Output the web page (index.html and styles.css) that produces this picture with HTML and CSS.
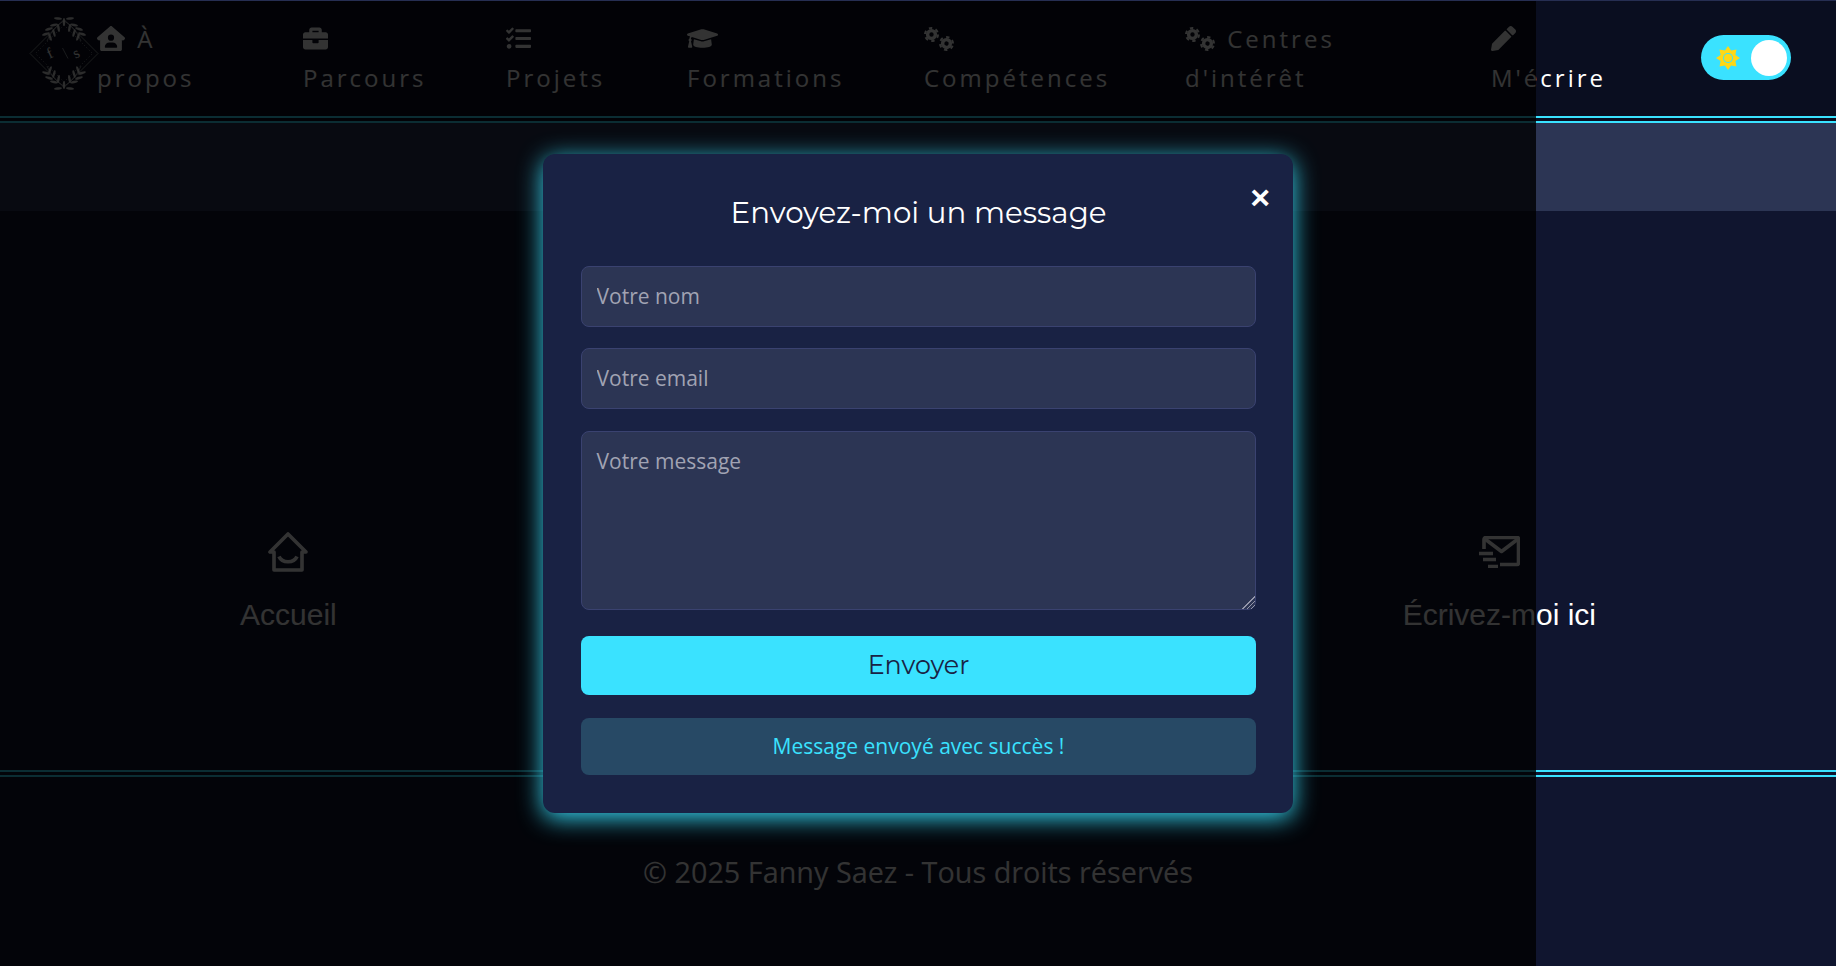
FILE: index.html
```html
<!DOCTYPE html>
<html lang="fr">
<head>
<meta charset="utf-8">
<title>Fanny Saez</title>
<link rel="stylesheet" href="styles.css">
</head>
<body>
<svg class="defs" width="0" height="0" aria-hidden="true">
  <defs>
    <g id="gear">
      <circle r="6.500" fill="none" stroke="currentColor" stroke-width="2" stroke-dasharray="3.400 3.407"/>
      <circle r="3.900" fill="none" stroke="currentColor" stroke-width="3.400"/>
    </g>
    <g id="cogs"><use href="#gear" transform="translate(7.500 7.500)"/><use href="#gear" transform="translate(22.500 16.500) rotate(20)"/></g>
    <ellipse id="leaf" rx="4" ry="1.200" class="leaf"/>
    <g id="spray">
      <use href="#leaf" transform="translate(28 2.500) rotate(8)"/>
      <use href="#leaf" transform="translate(40 2.500) rotate(-8)"/>
      <use href="#leaf" transform="translate(34 6) rotate(90)"/>
      <use href="#leaf" transform="translate(24 9) rotate(-12)"/>
      <use href="#leaf" transform="translate(44 9) rotate(12)"/>
      <use href="#leaf" transform="translate(28.500 12) rotate(80)"/>
      <use href="#leaf" transform="translate(39.500 12) rotate(100)"/>
      <use href="#leaf" transform="translate(19 13) rotate(-18)"/>
      <use href="#leaf" transform="translate(49 13) rotate(18)"/>
      <use href="#leaf" transform="translate(24 17) rotate(75)"/>
      <use href="#leaf" transform="translate(44 17) rotate(105)"/>
      <use href="#leaf" transform="translate(16 18) rotate(-18)"/>
      <use href="#leaf" transform="translate(52 18) rotate(18)"/>
      <use href="#leaf" transform="translate(20 21) rotate(70)"/>
      <use href="#leaf" transform="translate(48 21) rotate(110)"/>
      <path class="logo-line" d="M34 5C28 8 22 14 17 25M34 5C40 8 46 14 51 25"/>
    </g>
  </defs>
</svg>

<header class="site-header">
  <svg class="logo" viewBox="0 0 68 75" role="img" aria-label="Logo FS">
    <path class="logo-line" d="M34 3.500 68 37.500 34 71.500 0 37.500Z"/>
    <path class="logo-dots" d="M34 9 62.500 37.500 34 66 5.500 37.500Z"/>
    <path class="logo-line" d="M32.500 32 38 42.500"/>
    <text class="logo-letter" x="17" y="42" transform="rotate(-25 20 37)">f</text>
    <text class="logo-letter" x="43" y="42" transform="rotate(-25 46 37)">s</text>
    <use href="#spray"/>
    <use href="#spray" transform="translate(0 75) scale(1 -1)"/>
  </svg>
  <nav class="main-nav">
    <a class="nav-item nav-wide">
      <svg class="ico ico-house" viewBox="0 0 576 512"><path fill-rule="evenodd" d="M288 0C281 0 272 3 266 8L10 232C-1 243-3 258 6 270L22 288C32 299 47 300 58 291L64 286V480C64 498 78 512 96 512H480C498 512 512 498 512 480V286L518 291C529 300 544 299 554 288L570 270C579 258 577 243 566 232L310 8C304 3 295 0 288 0ZM288 176A64 64 0 1 1 288 304A64 64 0 1 1 288 176ZM400 448H176A16 16 0 0 1 160 432A96 96 0 0 1 256 336H320A96 96 0 0 1 416 432A16 16 0 0 1 400 448Z"/></svg>
      À propos
    </a>
    <a class="nav-item">
      <svg class="ico ico-square" viewBox="0 0 512 512"><path d="M320 336c0 8.840-7.160 16-16 16h-96c-8.840 0-16-7.160-16-16v-48H0v144c0 25.600 22.400 48 48 48h416c25.600 0 48-22.400 48-48V288H320v48zm144-208h-80V80c0-25.600-22.400-48-48-48H176c-25.600 0-48 22.400-48 48v48H48c-25.600 0-48 22.400-48 48v80h512v-80c0-25.600-22.400-48-48-48zm-144 0H192V96h128v32z"/></svg>
      Parcours
    </a>
    <a class="nav-item">
      <svg class="ico ico-square" viewBox="0 0 512 512"><path d="M139.610 35.500a12 12 0 0 0-17 0L58.930 98.810l-22.700-22.120a12 12 0 0 0-17 0L3.530 92.410a12 12 0 0 0 0 17l47.590 47.400a12.780 12.780 0 0 0 17.610 0l15.590-15.620L156.520 69a12.090 12.090 0 0 0 .09-17zm0 159.190a12 12 0 0 0-17 0l-63.680 63.720-22.700-22.100a12 12 0 0 0-17 0L3.530 252a12 12 0 0 0 0 17L51 316.500a12.770 12.770 0 0 0 17.600 0l15.700-15.690 72.200-72.220a12 12 0 0 0 .09-16.900zM64 368c-26.490 0-48.590 21.500-48.590 48S37.530 464 64 464a48 48 0 0 0 0-96zm432 16H208a16 16 0 0 0-16 16v32a16 16 0 0 0 16 16h288a16 16 0 0 0 16-16v-32a16 16 0 0 0-16-16zm0-320H208a16 16 0 0 0-16 16v32a16 16 0 0 0 16 16h288a16 16 0 0 0 16-16V80a16 16 0 0 0-16-16zm0 160H208a16 16 0 0 0-16 16v32a16 16 0 0 0 16 16h288a16 16 0 0 0 16-16v-32a16 16 0 0 0-16-16z"/></svg>
      Projets
    </a>
    <a class="nav-item">
      <svg class="ico ico-cap" viewBox="0 0 640 512"><path d="M622.340 153.200L343.400 67.500c-15.200-4.670-31.600-4.670-46.790 0L17.660 153.200c-23.540 7.230-23.540 38.360 0 45.590l48.630 14.940c-10.670 13.190-17.230 29.280-17.880 46.900C38.780 266.150 32 276.110 32 288c0 10.780 5.680 19.850 13.860 25.650L20.330 428.530C18.110 438.520 25.710 448 35.940 448h56.110c10.240 0 17.840-9.480 15.620-19.470L82.140 313.650C90.320 307.850 96 298.780 96 288c0-11.570-6.470-21.250-15.660-26.870.76-15.020 8.440-28.300 20.690-36.720L296.600 284.500c9.060 2.780 26.440 6.250 46.790 0l278.950-85.700c23.550-7.240 23.550-38.360 0-45.600zM352.790 315.090c-28.530 8.760-52.840 3.920-65.590 0l-145.020-44.550L128 384c0 35.350 85.960 64 192 64s192-28.650 192-64l-14.180-113.470-145.030 44.560z"/></svg>
      Formations
    </a>
    <a class="nav-item">
      <svg class="ico ico-cogs" viewBox="0 0 30 24"><use href="#cogs"/></svg>
      Compétences
    </a>
    <a class="nav-item nav-wider">
      <svg class="ico ico-cogs" viewBox="0 0 30 24"><use href="#cogs"/></svg>
      Centres d'intérêt
    </a>
    <a class="nav-item">
      <svg class="ico ico-square" viewBox="0 0 512 512"><path d="M497.900 142.100l-46.100 46.100c-4.700 4.700-12.300 4.700-17 0l-111-111c-4.700-4.700-4.700-12.300 0-17l46.100-46.100c18.700-18.700 49.100-18.700 67.900 0l60.100 60.100c18.800 18.700 18.800 49.100 0 67.900zM284.200 99.800L21.600 362.400.4 483.900c-2.900 16.400 11.400 30.600 27.800 27.800l121.500-21.300 262.600-262.600c4.700-4.700 4.700-12.300 0-17l-111-111c-4.800-4.700-12.400-4.700-17.100 0z"/></svg>
      M'écrire
    </a>
  </nav>
  <div class="theme-toggle">
    <svg class="sun" viewBox="0 0 24 24">
      <path class="sun-rays" d="M12 0 15.060 4.610 20.490 3.510 19.390 8.940 24 12 19.390 15.060 20.490 20.490 15.060 19.390 12 24 8.940 19.390 3.510 20.490 4.610 15.060 0 12 4.610 8.940 3.510 3.510 8.940 4.610Z"/>
      <circle class="sun-ring" cx="12" cy="12" r="5"/>
      <circle class="sun-core" cx="12" cy="12" r="4"/>
    </svg>
    <span class="knob"></span>
  </div>
</header>

<div class="band"></div>

<main class="hero">
  <a class="hero-link">
    <svg class="hero-house" viewBox="0 0 40 40"><path d="M20 2 2 20H6V38H34V20H38Z"/><path d="M11 24.500C14 31.500 26 31.500 29 24.500"/></svg>
    <span>Accueil</span>
  </a>
  <a class="hero-link">
    <svg class="hero-mail" viewBox="0 0 41 32"><path d="M5 13V3.500C5 2.500 6 1.500 7 1.500H38C39 1.500 39.500 2.500 39.500 3.500V26.500C39.500 27.500 39 28.500 38 28.500H21"/><path d="M6 3 22.500 15.500 39 3"/><path d="M0 17.500H14M4 23.500H17M9 30.500H19"/></svg>
    <span>Écrivez-moi ici</span>
  </a>
</main>

<footer class="site-footer">© 2025 Fanny Saez - Tous droits réservés</footer>

<div class="overlay"></div>

<section class="modal">
  <span class="modal-close">×</span>
  <h2 class="modal-title">Envoyez-moi un message</h2>
  <form class="modal-form">
    <input class="field" type="text" placeholder="Votre nom">
    <input class="field" type="email" placeholder="Votre email">
    <textarea class="field field-area" placeholder="Votre message"></textarea>
    <button class="send" type="button">Envoyer</button>
    <p class="success">Message envoyé avec succès !</p>
  </form>
</section>
</body>
</html>
```
FILE: styles.css
```css
* { box-sizing: border-box; }
html, body { height: 100%; }
body {
  margin: 0;
  background: #10152f;
  color: #fff;
  font-family: "Open Sans", sans-serif;
  display: flex;
  flex-direction: column;
  height: 966px;
  overflow: hidden;
}
.defs { position: absolute; }

.site-header {
  height: 123px;
  flex: none;
  background: #0a0e20;
  border-top: 1px solid #262e52;
  border-bottom: 7px double #3ae2ff;
  display: flex;
  padding-left: 30px;
}
.logo { width: 68px; height: 75px; margin-top: 15px; flex: none; overflow: visible; }
.leaf { fill: #ddd; }
.logo-line { fill: none; stroke: #fff; stroke-width: .5; }
.logo-dots { fill: none; stroke: #fff; stroke-width: .7; stroke-dasharray: .7 2.500; }
.logo-letter { fill: #fff; font-family: "Liberation Serif", serif; font-size: 15px; }

.main-nav {
  display: grid;
  grid-template-columns: 206px 203px 181px 237px 261px 306px 140px;
  flex: none;
  height: 100%;
  margin-left: -1px;
}
.nav-item {
  display: block;
  padding-top: 18px;
  font-size: 24px;
  line-height: 39px;
  letter-spacing: 3px;
  color: #fff;
  width: min-content;
}
.nav-wide { width: 120px; }
.nav-wider { width: 220px; }
.ico { fill: currentColor; vertical-align: -3px; margin-right: 3px; }
.ico-house { width: 28px; height: 25px; }
.ico-square { width: 25px; height: 25px; }
.ico-cap { width: 31px; height: 25px; }
.ico-cogs { width: 30px; height: 24px; }

.theme-toggle {
  width: 90px;
  height: 45px;
  margin: 34px 45px 0 auto;
  border-radius: 23px;
  background: #3ae2ff;
  display: flex;
  align-items: center;
  justify-content: space-between;
  padding: 0 4px 0 15px;
}
.sun { width: 24px; height: 24px; }
.sun-rays { fill: #ffd815; }
.sun-ring { fill: #3ae2ff; }
.sun-core { fill: #ffd815; }
.knob { width: 36px; height: 36px; border-radius: 50%; background: #fff; }

.band { height: 88px; flex: none; background: #2c3554; }

.hero {
  flex: none;
  height: 566px;
  padding: 321px 240px 0;
  display: flex;
  justify-content: space-between;
  align-items: flex-start;
  border-bottom: 7px double #3ae2ff;
}
.hero-link {
  display: flex;
  flex-direction: column;
  align-items: center;
  gap: 25px;
  font-family: "Liberation Sans", sans-serif;
  font-size: 30px;
  line-height: 36px;
}
.hero-house, .hero-mail { fill: none; stroke: #fff; stroke-width: 3.600; stroke-linejoin: round; }
.hero-house { width: 40px; height: 40px; }
.hero-mail { width: 41px; height: 32px; margin: 4px 0; }

.site-footer {
  flex: 1;
  text-align: center;
  font-size: 28.800px;
  padding-top: 75px;
  color: #fff;
}

.overlay {
  position: absolute;
  top: 1px;
  left: 0;
  width: 1536px;
  height: 965px;
  background: rgba(0, 0, 0, .8);
}

.modal {
  position: absolute;
  left: 543px;
  top: 154px;
  width: 750px;
  height: 659px;
  padding: 40px 37px 0 38px;
  background: #192244;
  border-radius: 12px;
  box-shadow: 0 5px 24px rgba(58, 226, 255, .95);
}
.modal-close {
  position: absolute;
  top: 23px;
  right: 23px;
  font-family: "Liberation Sans", sans-serif;
  font-size: 34px;
  font-weight: 700;
  line-height: 40px;
}
.modal-title {
  margin: 0 0 33px;
  text-align: center;
  font-family: Montserrat, Inter, sans-serif;
  font-size: 29.300px;
  line-height: 38px;
  font-weight: 400;
}
.modal-form { display: flex; flex-direction: column; }
.field {
  width: 100%;
  height: 60.600px;
  margin: 1px 0 21.400px;
  padding: 0 14.500px;
  background: #2c3554;
  border: 1px solid #3a4270;
  border-radius: 8px;
  font-family: "Open Sans", sans-serif;
  font-size: 21px;
  color: #fff;
}
.field + .field { margin-top: 0; }
.field::placeholder { color: #a1a3b3; opacity: 1; }
.field-area { height: 179.500px; margin-bottom: 25.500px; padding-top: 15px; resize: vertical; }
.field + .field-area { margin-top: .900px; }
.field-area::-webkit-resizer {
  background:
    linear-gradient(135deg, #2c3554 50%, transparent 50%),
    repeating-linear-gradient(135deg, #9496aa 0 1px, transparent 1px 3px);
}
.send {
  height: 59px;
  margin-bottom: 23px;
  padding: 0 0 2px;
  background: #3ae2ff;
  border: 0;
  border-radius: 8px;
  color: #192244;
  font-family: Montserrat, Inter, sans-serif;
  font-size: 25.400px;
  font-weight: 400;
}
.success {
  margin: 0;
  height: 57px;
  line-height: 56px;
  text-align: center;
  background: #274965;
  border-radius: 8px;
  color: #3ae2ff;
  font-size: 21px;
}
```
